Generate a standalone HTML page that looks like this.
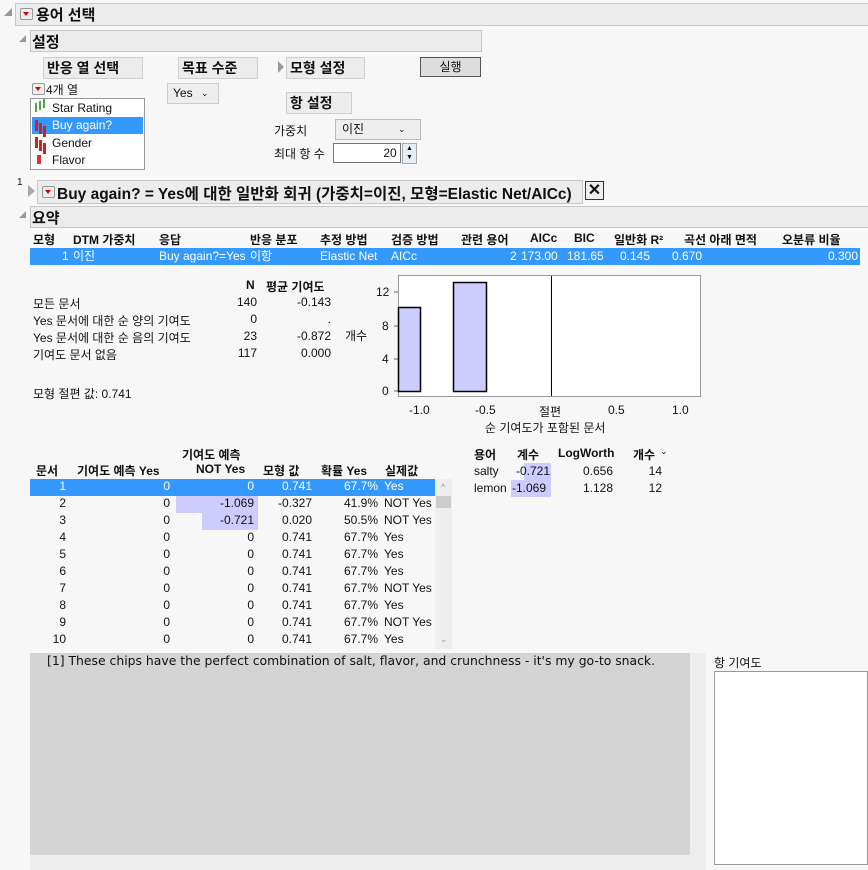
<!DOCTYPE html>
<html><head><meta charset="utf-8"><style>
body{margin:0;width:868px;height:870px;background:#f7f7f7;font-family:"Liberation Sans","Noto Sans CJK KR",sans-serif;font-size:12px;color:#111;position:relative;overflow:hidden}
div,span{position:absolute;white-space:nowrap}
.bar{background:#ececec;border:1px solid #c8c8c8}
.hd{font-size:15px;font-weight:bold}
.box{background:#ececec;border:1px solid #cfcfcf;font-size:14px;font-weight:bold;padding-left:3px;line-height:20px}
.red{width:11px;height:10px;background:#eee;border:1px solid #999;border-radius:2px}
.red:after{content:"";position:absolute;left:2px;top:3px;border-left:3.5px solid transparent;border-right:3.5px solid transparent;border-top:4px solid #d00}
.r{text-align:right}
.sel{background:#3399ff;color:#fff}
.pu{background:#ccccff}
</style></head><body>
<div style="left:4px;top:8px;width:0;height:0;border-left:8px solid transparent;border-bottom:8px solid #999"></div>
<div class="bar" style="left:15px;top:3px;width:853px;height:21px"></div>
<div class="red" style="left:20px;top:8px"></div>
<div class="hd" style="left:36px;top:4px">용어 선택</div>
<div style="left:19px;top:35px;border-left:7px solid transparent;border-bottom:7px solid #999"></div>
<div class="bar" style="left:30px;top:30px;width:450px;height:20px"></div>
<div class="hd" style="left:32px;top:31px">설정</div>
<div class="box" style="left:43px;top:57px;width:95px;height:20px">반응 열 선택</div>
<div class="box" style="left:178px;top:57px;width:75px;height:20px">목표 수준</div>
<div style="left:278px;top:61px;border-top:6px solid transparent;border-bottom:6px solid transparent;border-left:6px solid #999"></div>
<div class="box" style="left:286px;top:57px;width:74px;height:20px">모형 설정</div>
<div style="left:420px;top:57px;width:59px;height:18px;background:#ddd;border:1px solid #555;text-align:center;line-height:18px">실행</div>
<div class="red" style="left:32px;top:83px"></div>
<div style="left:46px;top:81px">4개 열</div>
<div style="left:30px;top:98px;width:113px;height:70px;background:#fff;border:1px solid #999"></div>
<div style="left:35px;top:103px;width:2px;height:9px;background:#4a4;box-shadow:4px -2px 0 #4a4,8px -4px 0 #4a4"></div>
<div style="left:52px;top:101px">Star Rating</div>
<div class="sel" style="left:32px;top:117px;width:111px;height:17px"></div>
<div style="left:35px;top:120px;width:3px;height:11px;background:#c22;box-shadow:4px 3px 0 #c22,8px 6px 0 #c22"></div>
<div style="left:52px;top:118px;color:#fff">Buy again?</div>
<div style="left:35px;top:137px;width:3px;height:11px;background:#c22;box-shadow:4px 3px 0 #c22,8px 6px 0 #c22"></div>
<div style="left:52px;top:136px">Gender</div>
<div style="left:37px;top:155px;width:4px;height:9px;background:#d33"></div>
<div style="left:52px;top:153px">Flavor</div>
<div style="left:167px;top:83px;width:45px;height:19px;background:#eee;border:1px solid #ccc;line-height:19px;padding-left:5px">Yes <span style="left:33px;top:0;font-size:9px">⌄</span></div>
<div class="box" style="left:286px;top:92px;width:61px;height:20px">항 설정</div>
<div style="left:274px;top:122px">가중치</div>
<div style="left:335px;top:119px;width:78px;height:19px;background:#eee;border:1px solid #bbb;line-height:19px;padding-left:6px">이진<span style="left:62px;font-size:9px">⌄</span></div>
<div style="left:274px;top:145px">최대 항 수</div>
<div style="left:333px;top:143px;width:66px;height:18px;background:#fff;border:1px solid #777;text-align:right;line-height:18px">20&nbsp;</div>
<div style="left:402px;top:143px;width:13px;height:19px;background:#e8eef8;border:1px solid #aaa;font-size:7px;line-height:9px;text-align:center">▲<br>▼</div>
<div style="left:17px;top:177px;font-size:10px">1</div>
<div style="left:28px;top:185px;border-top:6px solid transparent;border-bottom:6px solid transparent;border-left:7px solid #aaa"></div>
<div class="bar" style="left:37px;top:180px;width:544px;height:22px"></div>
<div class="red" style="left:42px;top:186px"></div>
<div class="hd" style="left:57px;top:182px;font-size:15.5px">Buy again? = Yes에 대한 일반화 회귀 (가중치=이진, 모형=Elastic Net/AICc)</div>
<div style="left:585px;top:181px;width:17px;height:17px;border:1px solid #333;background:#eee;text-align:center;line-height:17px;font-size:16px;font-weight:bold">✕</div>
<div style="left:19px;top:211px;border-left:7px solid transparent;border-bottom:7px solid #999"></div>
<div class="bar" style="left:30px;top:206px;width:838px;height:20px"></div>
<div class="hd" style="left:32px;top:207px">요약</div>
<div style="left:0;top:231px;width:868px;font-weight:bold">
<span style="left:33px">모형</span><span style="left:73px">DTM 가중치</span><span style="left:159px">응답</span><span style="left:250px">반응 분포</span><span style="left:320px">추정 방법</span><span style="left:391px">검증 방법</span><span style="left:461px">관련 용어</span><span style="left:530px">AICc</span><span style="left:574px">BIC</span><span style="left:614px">일반화 R²</span><span style="left:684px">곡선 아래 면적</span><span style="left:782px">오분류 비율</span></div>
<div class="sel" style="left:30px;top:248px;width:830px;height:17px;line-height:17px">
<span style="left:32px">1</span><span style="left:43px">이진</span><span style="left:129px">Buy again?=Yes</span><span style="left:220px">이항</span><span style="left:290px">Elastic Net</span><span style="left:361px">AICc</span><span style="left:480px">2</span><span style="left:491px">173.00</span><span style="left:537px">181.65</span><span style="left:590px">0.145</span><span style="left:642px">0.670</span><span style="left:798px">0.300</span></div>
<div style="left:0;top:278px;font-weight:bold"><span style="left:246px">N</span><span style="left:266px">평균 기여도</span></div>
<div style="left:33px;top:295px">모든 문서</div><div class="r" style="left:220px;top:295px;width:37px">140</div><div class="r" style="left:280px;top:295px;width:51px">-0.143</div>
<div style="left:33px;top:312px">Yes 문서에 대한 순 양의 기여도</div><div class="r" style="left:220px;top:312px;width:37px">0</div><div class="r" style="left:280px;top:312px;width:51px">.</div>
<div style="left:33px;top:329px">Yes 문서에 대한 순 음의 기여도</div><div class="r" style="left:220px;top:329px;width:37px">23</div><div class="r" style="left:280px;top:329px;width:51px">-0.872</div>
<div style="left:33px;top:346px">기여도 문서 없음</div><div class="r" style="left:220px;top:346px;width:37px">117</div><div class="r" style="left:280px;top:346px;width:51px">0.000</div>
<div style="left:33px;top:385px">모형 절편 값: 0.741</div>
<div style="left:345px;top:327px">개수</div>
<div style="left:376px;top:285px">12</div><div style="left:382px;top:319px">8</div><div style="left:382px;top:352px">4</div><div style="left:382px;top:384px">0</div>
<svg style="position:absolute;left:390px;top:274px" width="312" height="126">
<rect x="8.5" y="1.5" width="302" height="121" fill="#fff" stroke="#999"/>
<line x1="4" y1="18" x2="8" y2="18" stroke="#666"/><line x1="4" y1="52" x2="8" y2="52" stroke="#666"/><line x1="4" y1="85" x2="8" y2="85" stroke="#666"/><line x1="4" y1="117" x2="8" y2="117" stroke="#666"/>
<rect x="8.5" y="33.5" width="22" height="84" fill="#ccccff" stroke="#000" stroke-width="1.5"/>
<rect x="63.5" y="8.5" width="33" height="109" fill="#ccccff" stroke="#000" stroke-width="1.5"/>
<line x1="161.5" y1="2" x2="161.5" y2="122" stroke="#000"/>
</svg>
<div style="left:409px;top:403px">-1.0</div><div style="left:475px;top:403px">-0.5</div><div style="left:539px;top:403px">절편</div><div style="left:608px;top:403px">0.5</div><div style="left:672px;top:403px">1.0</div>
<div style="left:485px;top:419px">순 기여도가 포함된 문서</div>
<div style="left:0;top:446px;font-weight:bold"><span style="left:182px">기여도 예측</span></div>
<div style="left:0;top:462px;font-weight:bold"><span style="left:36px">문서</span><span style="left:77px">기여도 예측 Yes</span><span style="left:196px">NOT Yes</span><span style="left:263px">모형 값</span><span style="left:321px">확률 Yes</span><span style="left:385px">실제값</span></div>
<div class="sel" style="left:30px;top:479px;width:405px;height:17px"></div>
<div class="pu" style="left:176px;top:496px;width:82px;height:17px"></div>
<div class="pu" style="left:202px;top:513px;width:56px;height:17px"></div>
<div style="left:435px;top:479px;width:17px;height:170px;background:#eee"></div>
<div style="left:436px;top:496px;width:15px;height:12px;background:#ccc"></div>
<div style="left:441px;top:482px;font-size:9px;color:#999">^</div>
<div style="left:440px;top:634px;font-size:9px;color:#999">⌄</div>
<div id="rows" style="left:0;top:479px"></div>
<div style="left:0;top:446px;font-weight:bold"><span style="left:474px">용어</span><span style="left:517px">계수</span><span style="left:558px">LogWorth</span><span style="left:633px">개수</span><span style="left:660px;font-weight:normal;font-size:9px">⌄</span></div>
<div class="pu" style="left:524px;top:463px;width:27px;height:17px"></div>
<div class="pu" style="left:511px;top:480px;width:40px;height:17px"></div>
<div style="left:474px;top:464px">salty</div><div style="left:516px;top:464px">-0.721</div><div class="r" style="left:570px;top:464px;width:43px">0.656</div><div class="r" style="left:640px;top:464px;width:22px">14</div>
<div style="left:474px;top:481px">lemon</div><div style="left:512px;top:481px">-1.069</div><div class="r" style="left:570px;top:481px;width:43px">1.128</div><div class="r" style="left:640px;top:481px;width:22px">12</div>
<div style="left:30px;top:653px;width:660px;height:202px;background:#d4d4d4"></div>
<div style="left:690px;top:653px;width:16px;height:217px;background:#eee"></div>
<div style="left:30px;top:855px;width:660px;height:15px;background:#eee"></div>
<div style="left:47px;top:653px;font-family:'DejaVu Sans',sans-serif;font-size:12.4px">[1] These chips have the perfect combination of salt, flavor, and crunchness - it's my go-to snack.</div>
<div style="left:714px;top:654px">항 기여도</div>
<div style="left:714px;top:671px;width:152px;height:192px;background:#fff;border:1px solid #999"></div>
<script>
var d=[["1","0","0","0.741","67.7%","Yes"],["2","0","-1.069","-0.327","41.9%","NOT Yes"],["3","0","-0.721","0.020","50.5%","NOT Yes"],["4","0","0","0.741","67.7%","Yes"],["5","0","0","0.741","67.7%","Yes"],["6","0","0","0.741","67.7%","Yes"],["7","0","0","0.741","67.7%","NOT Yes"],["8","0","0","0.741","67.7%","Yes"],["9","0","0","0.741","67.7%","NOT Yes"],["10","0","0","0.741","67.7%","Yes"]];
var h="";d.forEach(function(r,i){var c=i==0?"color:#fff;":"";var t=i*17;
h+='<div class="r" style="'+c+'left:30px;top:'+t+'px;width:36px">'+r[0]+'</div><div class="r" style="'+c+'left:100px;top:'+t+'px;width:70px">'+r[1]+'</div><div class="r" style="'+c+'left:180px;top:'+t+'px;width:74px">'+r[2]+'</div><div class="r" style="'+c+'left:260px;top:'+t+'px;width:52px">'+r[3]+'</div><div class="r" style="'+c+'left:320px;top:'+t+'px;width:58px">'+r[4]+'</div><div style="'+c+'left:384px;top:'+t+'px">'+r[5]+'</div>';});
document.getElementById("rows").innerHTML=h;
</script>
</body></html>
